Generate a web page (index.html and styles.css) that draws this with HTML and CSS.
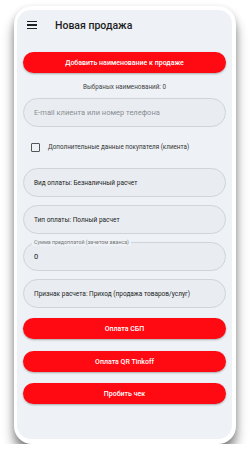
FILE: index.html
```html
<!DOCTYPE html>
<html lang="ru">
<head>
    <meta charset="UTF-8">
    <meta name="viewport" content="width=device-width, initial-scale=1.0">
    <title>Новая продажа</title>
    <link rel="stylesheet" href="styles.css">
</head>
<body>
    <div class="phone">
        <div class="screen">
            <header class="topbar">
                <div class="burger"><span></span><span></span><span></span></div>
                <h1>Новая продажа</h1>
            </header>

            <button class="btn btn-add">Добавить наименование к продаже</button>
            <p class="counter">Выбраных наименований: 0</p>

            <div class="field field-email">E-mail клиента или номер телефона</div>

            <label class="check-row">
                <span class="check-box"></span>
                Дополнительные данные покупателя (клиента)
            </label>

            <div class="field field-vid">Вид оплаты: Безналичный расчет</div>
            <div class="field field-gap">Тип оплаты: Полный расчет</div>
            <div class="field field-gap field-outlined">
                <span class="field-label">Сумма предоплатой (зачетом аванса)</span>
                0
            </div>
            <div class="field field-gap">Признак расчета: Приход (продажа товаров/услуг)</div>

            <button class="btn btn-sbp">Оплата СБП</button>
            <button class="btn btn-qr">Оплата QR Tinkoff</button>
            <button class="btn btn-check">Пробить чек</button>
        </div>
    </div>
</body>
</html>
```

FILE: styles.css
```css
body {
    margin: 0;
    padding: 0;
    background-color: #fff;
    font-family: Roboto, "Noto Sans", sans-serif;
}

.phone {
    width: 222px;
    height: 438px;
    margin: 6px 0 0 14px;
    padding: 4px 4px 5px 3px;
    box-sizing: border-box;
    background-color: #fff;
    border-radius: 18px;
    box-shadow: 0 10px 12px rgba(0, 0, 0, 0.45), 0 2px 6px rgba(0, 0, 0, 0.15);
}

.screen {
    height: 100%;
    padding: 0 6px;
    box-sizing: border-box;
    background-color: #eef2f6;
    border-radius: 14px;
    display: flex;
    flex-direction: column;
}

.topbar {
    height: 30px;
    display: flex;
    align-items: center;
}

.burger {
    width: 10px;
    margin-left: 4px;
    display: flex;
    flex-direction: column;
    gap: 2px;
}

.burger span {
    height: 1.5px;
    background-color: #222;
}

.topbar h1 {
    margin: 0 0 0 18px;
    font-size: 10.5px;
    font-weight: 500;
    color: #1d1d1d;
}

.btn {
    height: 21px;
    border: none;
    border-radius: 11px;
    background-color: #ff0a12;
    color: #fff;
    font-family: Roboto, sans-serif;
    font-size: 7px;
    font-weight: 500;
    box-shadow: 0 1px 2px rgba(0, 0, 0, 0.3);
    padding: 0;
}

.btn-add {
    margin-top: 12px;
}

.counter {
    margin: 9px 0 0;
    line-height: 10px;
    font-size: 6.3px;
    color: #444;
    text-align: center;
}

.field {
    position: relative;
    height: 29px;
    box-sizing: border-box;
    padding-left: 10px;
    display: flex;
    align-items: center;
    background-color: #e9edf1;
    border: 1px solid #cfd4da;
    border-radius: 15px;
    font-size: 6.5px;
    color: #222;
}

.field-email {
    margin-top: 6px;
    font-size: 7.5px;
    color: #8a8d92;
}

.check-row {
    height: 20px;
    margin-top: 10px;
    padding-left: 8px;
    display: flex;
    align-items: center;
    gap: 8px;
    font-size: 6.3px;
    color: #333;
}

.check-box {
    width: 9px;
    height: 9px;
    box-sizing: border-box;
    border: 1.5px solid #555;
    border-radius: 1px;
}

.field-vid {
    margin-top: 11px;
}

.field-gap {
    margin-top: 8px;
}

.field-outlined {
    font-size: 7.5px;
}

.field-label {
    position: absolute;
    left: 8px;
    top: -4px;
    padding: 0 2px;
    background-color: #eef2f6;
    font-size: 5.3px;
    line-height: 7px;
    color: #777;
}

.btn-sbp {
    margin-top: 10px;
}

.btn-qr {
    margin-top: 12px;
}

.btn-check {
    margin-top: 11px;
}
```
